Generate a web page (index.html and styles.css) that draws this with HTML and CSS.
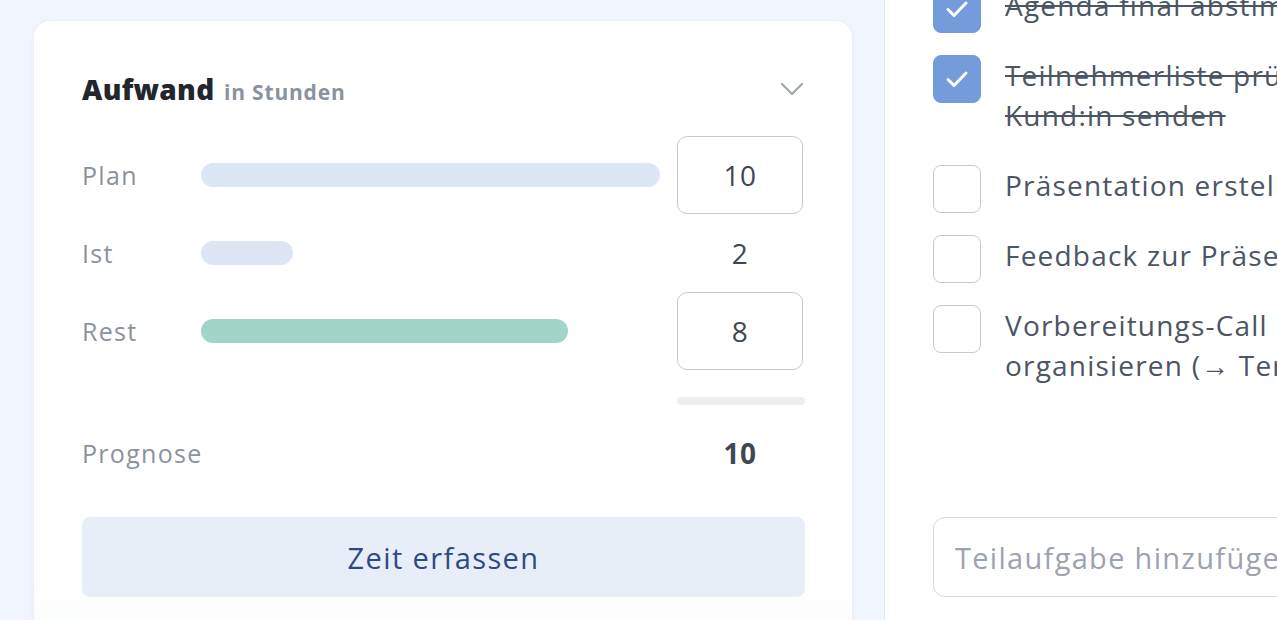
FILE: index.html
```html
<!DOCTYPE html>
<html lang="de">
<head>
    <meta charset="UTF-8" />
    <meta name="viewport" content="width=device-width, initial-scale=1.0" />
    <title>Aufwand</title>
    <link rel="stylesheet" href="styles.css">
</head>
<body>

<section class="card">
    <div class="card-head">
        <h2>Aufwand <span>in Stunden</span></h2>
        <svg class="chevron" width="24" height="14" viewBox="0 0 24 14"><path d="M2 2l10 10L22 2" fill="none" stroke="#a0a6ae" stroke-width="2.2" stroke-linecap="round" stroke-linejoin="round"/></svg>
    </div>

    <div class="row">
        <span class="label">Plan</span>
        <div class="track"><div class="bar bar-light" style="width:100%"></div></div>
        <input class="value-input" type="text" value="10" />
    </div>
    <div class="row">
        <span class="label">Ist</span>
        <div class="track"><div class="bar bar-light" style="width:20%"></div></div>
        <span class="value">2</span>
    </div>
    <div class="row">
        <span class="label">Rest</span>
        <div class="track"><div class="bar bar-green" style="width:80%"></div></div>
        <input class="value-input" type="text" value="8" />
    </div>
    <div class="sum-line"></div>
    <div class="row row-total">
        <span class="label">Prognose</span>
        <div class="track"></div>
        <span class="value strong">10</span>
    </div>

    <button class="btn-time">Zeit erfassen</button>
</section>

<aside class="panel">
    <ul class="tasks">
        <li class="task done">
            <span class="check"><svg width="24" height="18" viewBox="0 0 24 18"><path d="M3 9.5l6 6L21 3" fill="none" stroke="#fff" stroke-width="3" stroke-linecap="round" stroke-linejoin="round"/></svg></span>
            <span class="task-text">Agenda final abstimmen</span>
        </li>
        <li class="task done">
            <span class="check"><svg width="24" height="18" viewBox="0 0 24 18"><path d="M3 9.5l6 6L21 3" fill="none" stroke="#fff" stroke-width="3" stroke-linecap="round" stroke-linejoin="round"/></svg></span>
            <span class="task-text">Teilnehmerliste prüfen und an<br>Kund:in senden</span>
        </li>
        <li class="task">
            <span class="check"></span>
            <span class="task-text">Präsentation erstellen</span>
        </li>
        <li class="task">
            <span class="check"></span>
            <span class="task-text">Feedback zur Präsentation einholen</span>
        </li>
        <li class="task">
            <span class="check"></span>
            <span class="task-text">Vorbereitungs-Call mit Kund:in<br>organisieren (→ Termin finden)</span>
        </li>
    </ul>
    <input class="add-task" type="text" placeholder="Teilaufgabe hinzufügen" />
</aside>

</body>
</html>
```

FILE: styles.css
```css
body {
    margin: 0; font-family: "Open Sans", "Noto Sans", sans-serif;
    background: #f1f5fd; color: #464f5b;
    display: flex; height: 100vh; overflow: hidden;
}

.card {
    width: 818px; box-sizing: border-box; flex-shrink: 0; align-self: flex-start;
    margin: 21px 0 0 34px; padding: 48px 47px 80px 48px;
    background: linear-gradient(#fff 560px, #fafbfc 620px);
    border-radius: 16px;
    box-shadow: 0 0 0 1px #eaeef6, 0 2px 6px rgba(60, 80, 120, 0.04);
}
.card-head {
    display: flex; justify-content: space-between; align-items: center;
    height: 40px; margin-bottom: 27px;
}
.card-head h2 { margin: 0; font-size: 28px; font-weight: 800; color: #23262d; letter-spacing: 0.3px; }
.card-head h2 span { font-size: 21px; font-weight: 700; color: #8a929e; margin-left: 2px; letter-spacing: 0.8px; }
.chevron { margin-right: 1px; }

.row { display: flex; align-items: center; height: 78px; }
.label { width: 119px; font-size: 25px; color: #8b929c; letter-spacing: 1.3px; }
.track { width: 459px; margin-right: 17px; }
.bar { height: 24px; border-radius: 12px; }
.bar-light { background: #dde6f5; }
.bar-green { background: #a1d5c8; }
.value-input, .value {
    width: 126px; box-sizing: border-box; text-align: center;
    font-family: inherit; font-size: 28px; color: #3f4752; letter-spacing: 0.5px;
}
.value-input {
    height: 78px; border: 1.5px solid #c6cace; border-radius: 10px;
    background: #fff; outline: none;
}
.value.strong { font-weight: 700; }

.sum-line {
    width: 128px; height: 8px; margin: 27px 0 0 595px;
    background: #eceef1; border-radius: 4px;
}
.row-total { height: 40px; margin-top: 28px; }

.btn-time {
    display: block; width: 100%; height: 80px; margin-top: 44px;
    border: none; border-radius: 8px; background: #e8eef8;
    font-family: inherit; font-size: 29px; color: #2d4a85; cursor: pointer;
    letter-spacing: 1.4px;
}

.panel {
    flex: 1; margin-left: 32px; padding: 0 0 23px 48px;
    background: #fff; border-left: 1px solid #e4e8f0;
    display: flex; flex-direction: column;
}
.tasks { list-style: none; margin: -15px 0 0; padding: 0; }
.task { display: flex; align-items: flex-start; margin-bottom: 22px; white-space: nowrap; }
.check {
    width: 48px; height: 48px; box-sizing: border-box; flex-shrink: 0;
    border: 1.5px solid #c6cace; border-radius: 8px; margin-right: 24px;
    display: flex; align-items: center; justify-content: center;
}
.task.done .check { background: #749cdb; border-color: #749cdb; }
.task-text { font-size: 28px; line-height: 40px; padding: 0 0 8px; color: #4b5563; letter-spacing: 1.2px; }
.task.done .task-text { text-decoration: line-through; text-decoration-thickness: 2px; }

.add-task {
    margin-top: auto; height: 80px; box-sizing: border-box; width: 120%;
    border: 1.5px solid #d5d8dc; border-radius: 12px; padding: 0 21px;
    font-family: inherit; font-size: 29px; color: #464f5b; outline: none;
    letter-spacing: 1.3px;
}
.add-task::placeholder { color: #9ca3af; }
```
